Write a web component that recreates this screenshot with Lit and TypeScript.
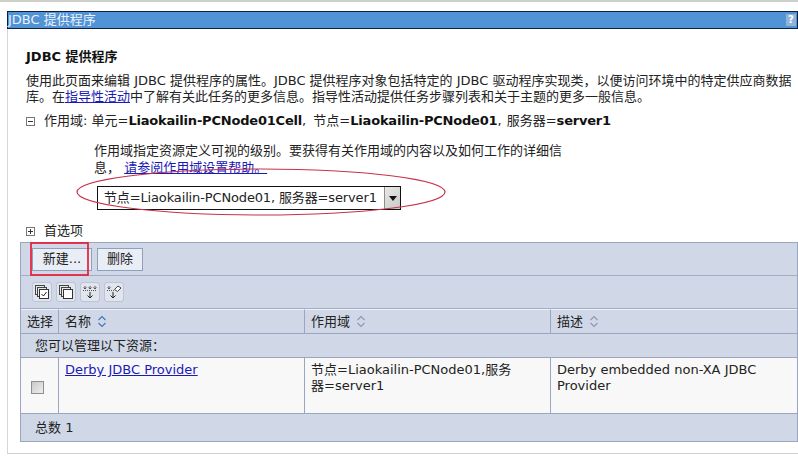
import { LitElement, html, css, svg } from "lit";
import { customElement } from "lit/decorators.js";

const sortIcon = (active = false) => html`<svg class="sort ${active ? "on" : ""}" width="10" height="13" viewBox="0 0 10 13"><path d="M1.5 5 5 1.5 8.5 5M1.5 8 5 11.5 8.5 8" fill="none" stroke-width="1.1"/></svg>`;

const tools = [
  svg`<rect x="1.5" y="1.5" width="9" height="9" fill="#e8e8e8" stroke="#444"/><rect x="3.5" y="3.5" width="9" height="9" fill="#e8e8e8" stroke="#444"/><rect x="5.5" y="5.5" width="9" height="9" fill="#fff" stroke="#333"/><path d="M7.5 10l2 2 3-4" fill="none" stroke="#222"/>`,
  svg`<rect x="1.5" y="1.5" width="9" height="9" fill="#e8e8e8" stroke="#444"/><rect x="3.5" y="3.5" width="9" height="9" fill="#e8e8e8" stroke="#444"/><rect x="5.5" y="5.5" width="9" height="9" fill="#fff" stroke="#333"/>`,
  svg`<path d="M1 6.5h14" stroke="#555" stroke-dasharray="1 1"/><path d="M3 2v3M1.5 3.5 3 5l1.5-1.5M8 2v3M6.5 3.5 8 5l1.5-1.5M13 2v3M11.5 3.5 13 5l1.5-1.5" fill="none" stroke="#555"/><path d="M8 8v6M5.5 11.5 8 14l2.5-2.5" fill="none" stroke="#222"/>`,
  svg`<path d="M8.5 5.5 12 2l3 2-3.5 3.5z" fill="#fff" stroke="#444"/><path d="M1 6.5h7" stroke="#555" stroke-dasharray="1 1"/><path d="M3 2v3M1.5 3.5 3 5l1.5-1.5" fill="none" stroke="#555"/><path d="M7 8v6M4.5 11.5 7 14l2.5-2.5" fill="none" stroke="#222"/>`,
];

@customElement("app-root")
export class AppRoot extends LitElement {
  static styles = css`
    :host {
      display: block;
      position: relative;
      width: 798px;
      height: 476px;
      overflow: hidden;
      background: #fff;
      color: #222;
      font: 13px/16px "DejaVu Sans", "Noto Sans CJK SC", sans-serif;
    }
    .topline { height: 2px; background: #cfcfcb; }
    .card {
      margin: 9px 0 0 7px;
      height: 443px;
      box-sizing: border-box;
      border-left: 1px solid #d6d6d6;
      border-bottom: 1px solid #d0d0d0;
      display: flex;
      flex-direction: column;
    }
    .titlebar {
      margin-left: -1px;
      height: 18px;
      box-sizing: border-box;
      border: 1px solid #0b2140;
      background: #5293d6;
      color: #e8f1fa;
      display: flex;
      justify-content: space-between;
      align-items: center;
      line-height: 16px;
    }
    .titlebar .help {
      width: 10px;
      height: 12px;
      margin-right: 1px;
      background: #8fb4d8;
      color: #fff;
      font-size: 10px;
      line-height: 12px;
      font-weight: bold;
      text-align: center;
    }
    .body { padding: 19px 0 0 18px; display: flex; flex-direction: column; }
    h2 { margin: 0; font-size: 13px; line-height: 18px; font-weight: bold; color: #111; }
    .desc { margin: 7px 0 0 0; white-space: nowrap; }
    a { color: #1a1ab8; text-decoration: underline; }
    .scope { display: flex; align-items: center; margin-top: 8px; white-space: nowrap; height: 16px; }
    .twisty { width: 9px; height: 9px; margin-right: 9px; flex: none; }
    .scope b { color: #111; letter-spacing: -0.2px; }
    .sep1 { margin-right: 3px; }
    .sep2 { margin-right: 1px; }
    .scope-help { margin: 13px 0 0 68px; line-height: 17px; white-space: nowrap; }
    .select {
      margin: 10px 0 0 71px;
      width: 304px;
      height: 24px;
      box-sizing: border-box;
      border: 1px solid #111;
      display: flex;
      align-items: center;
      justify-content: space-between;
      padding-left: 6px;
      background: #fff;
      letter-spacing: -0.14px;
    }
    .select .arrow {
      width: 16px;
      height: 22px;
      background: linear-gradient(135deg, #e8e8e6, #c9c9c7);
      border-left: 1px solid #8d8d8d;
      box-sizing: border-box;
      display: flex;
      align-items: center;
      justify-content: center;
    }
    .prefs { margin-top: 13px; height: 16px; }
    .table {
      margin: 3px 0 0 -6px;
      width: 778px;
      box-sizing: border-box;
      border: 1px solid #9aa6c0;
      background: #d0d8e8;
      display: grid;
      grid-template-columns: 38px 246px 246px 1fr;
    }
    .bar {
      grid-column: 1 / -1;
      display: flex;
      align-items: center;
      border-bottom: 1px solid #a3aec6;
    }
    .bar1 { height: 32px; padding-left: 11px; gap: 5px; }
    .btn {
      height: 23px;
      box-sizing: border-box;
      border: 1px solid #8fa0ba;
      background: #e9eef6;
      display: flex;
      align-items: center;
      justify-content: center;
      color: #222;
    }
    .btn.new { width: 60px; }
    .btn.del { width: 46px; }
    .bar2 { height: 32px; padding-left: 12px; gap: 6px; }
    .tool {
      width: 18px;
      height: 18px;
      border-radius: 2px;
      background: #e1e5ee;
      outline: 1px solid #bcc4d6;
      display: flex;
      align-items: center;
      justify-content: center;
    }
    .th {
      height: 25px;
      box-sizing: border-box;
      border-right: 1px solid #9aa6c0;
      border-bottom: 1px solid #9aa6c0;
      border-top: 1px solid #eef1f7;
      display: flex;
      align-items: center;
      gap: 6px;
      padding-left: 6px;
    }
    .th.last { border-right: 0; }
    .sort { flex: none; stroke: #8d97ad; }
    .sort.on { stroke: #3f74b5; }
    .group {
      grid-column: 1 / -1;
      height: 24px;
      box-sizing: border-box;
      border-bottom: 1px solid #9aa6c0;
      padding-left: 14px;
      display: flex;
      align-items: center;
    }
    .td {
      height: 56px;
      box-sizing: border-box;
      background: #f8f8f8;
      border-right: 1px solid #9aa6c0;
      border-bottom: 1px solid #9aa6c0;
      padding: 4px 6px 0;
    }
    .td.last { border-right: 0; }
    .td.check { display: flex; align-items: center; justify-content: center; padding: 3px 4px 0 0; }
    .box {
      width: 13px;
      height: 13px;
      box-sizing: border-box;
      border: 1px solid #8f8f8f;
      background: linear-gradient(135deg, #c8c8c8, #efefef);
    }
    .foot {
      grid-column: 1 / -1;
      height: 27px;
      padding-left: 14px;
      display: flex;
      align-items: center;
    }
    .marks { position: absolute; left: 0; top: 0; pointer-events: none; }
  `;

  render() {
    return html`
      <div class="topline"></div>
      <div class="card">
        <div class="titlebar"><span>JDBC 提供程序</span><span class="help">?</span></div>
        <div class="body">
          <h2>JDBC 提供程序</h2>
          <p class="desc">使用此页面来编辑 JDBC 提供程序的属性。JDBC 提供程序对象包括特定的 JDBC 驱动程序实现类，以便访问环境中的特定供应商数据<br />库。在<a href="#">指导性活动</a>中了解有关此任务的更多信息。指导性活动提供任务步骤列表和关于主题的更多一般信息。</p>
          <div class="scope">
            <svg class="twisty" viewBox="0 0 9 9"><rect x=".5" y=".5" width="8" height="8" fill="#fff" stroke="#777"/><path d="M2 4.5h5" stroke="#333"/></svg>
            <span>作用域: 单元=<b>Liaokailin-PCNode01Cell</b><span class="sep1">,</span> 节点=<b>Liaokailin-PCNode01</b><span class="sep2">,</span> 服务器=<b>server1</b></span>
          </div>
          <div class="scope-help">作用域指定资源定义可视的级别。要获得有关作用域的内容以及如何工作的详细信<br />息， <a href="#">请参阅作用域设置帮助。</a></div>
          <div class="select">
            <span>节点=Liaokailin-PCNode01, 服务器=server1</span>
            <span class="arrow"><svg width="8" height="5" viewBox="0 0 8 5"><path d="M0 0h8L4 5z" fill="#111"/></svg></span>
          </div>
          <div class="scope prefs">
            <svg class="twisty" viewBox="0 0 9 9"><rect x=".5" y=".5" width="8" height="8" fill="#fff" stroke="#777"/><path d="M2 4.5h5M4.5 2v5" stroke="#333"/></svg>
            <span>首选项</span>
          </div>
          <div class="table">
            <div class="bar bar1">
              <div class="btn new">新建...</div>
              <div class="btn del">删除</div>
            </div>
            <div class="bar bar2">
              ${tools.map((t) => html`<div class="tool"><svg width="16" height="16" viewBox="0 0 16 16">${t}</svg></div>`)}
            </div>
            <div class="th">选择</div>
            <div class="th">名称 ${sortIcon(true)}</div>
            <div class="th">作用域 ${sortIcon()}</div>
            <div class="th last">描述 ${sortIcon()}</div>
            <div class="group">您可以管理以下资源：</div>
            <div class="td check"><span class="box"></span></div>
            <div class="td"><a href="#">Derby JDBC Provider</a></div>
            <div class="td">节点=Liaokailin-PCNode01,服务<br />器=server1</div>
            <div class="td last">Derby embedded non-XA JDBC<br />Provider</div>
            <div class="foot">总数 1</div>
          </div>
        </div>
      </div>
      <svg class="marks" width="798" height="476" viewBox="0 0 798 476">
        <ellipse cx="261" cy="192" rx="184" ry="23" fill="none" stroke="#c8324a" stroke-width="1.2"/>
        <rect x="31" y="243" width="57" height="32" fill="none" stroke="#e8102f" stroke-width="1.6"/>
      </svg>
    `;
  }
}
